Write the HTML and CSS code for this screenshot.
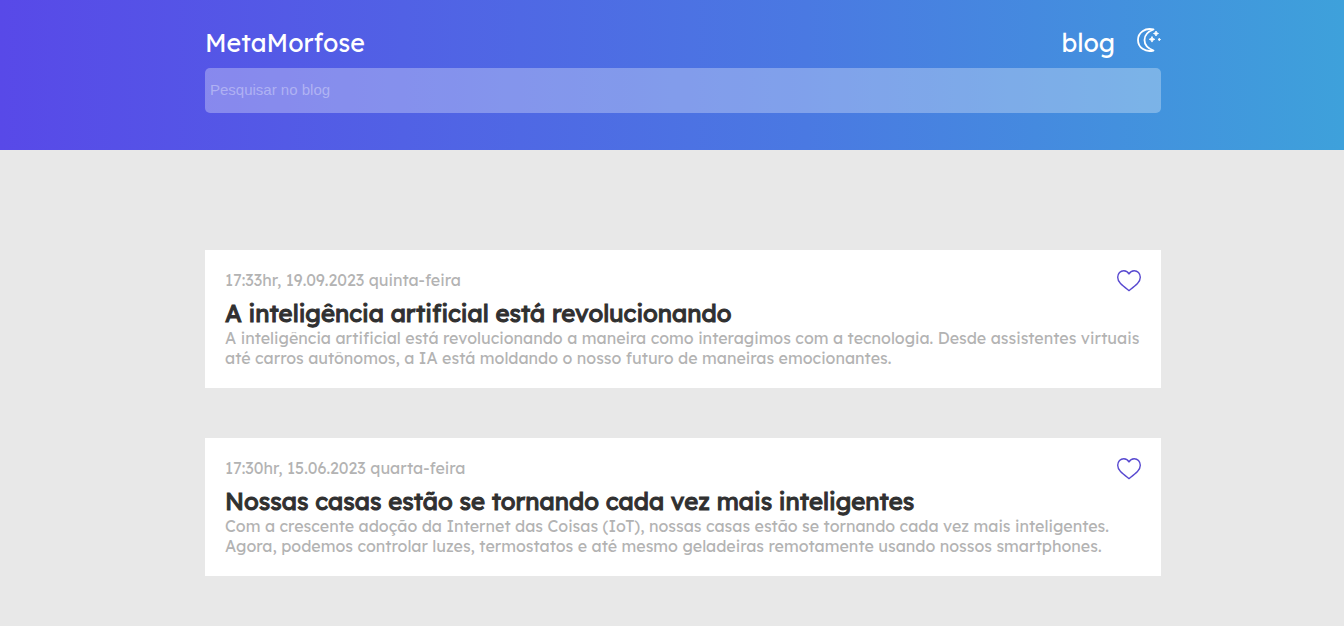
FILE: index.html
```html
<!DOCTYPE html>
<html lang="pt-BR">
<head>
<meta charset="utf-8">
<title>MetaMorfose</title>
<link rel="stylesheet" href="styles.css">
</head>
<body>
<header class="header">
  <div class="header-inner">
    <nav class="nav">
      <a class="brand" href="#">MetaMorfose</a>
      <div class="nav-actions">
        <a class="nav-link" href="#">blog</a>
        <button class="icon-button" type="button" aria-label="Modo escuro">
          <svg class="icon" viewBox="0 0 24 24" aria-hidden="true">
            <path d="M16.500 1.500C8-.5 1 4.500 1 12s7 12.500 15.500 10.500C11 20.500 7.500 17 7.500 12s3.500-8.500 9-10.500Z" fill="none" stroke="currentColor" stroke-width="1.800" stroke-linejoin="round"/>
            <path d="M19 3l.8 1.700 1.700.8-1.700.8-.8 1.700-.8-1.700-1.700-.8 1.700-.8ZM15 8.500l.9 1.900 1.900.9-1.900.9-.9 1.900-.9-1.900-1.900-.9 1.900-.9ZM22.300 10.200l.4.900.9.400-.9.400-.4.900-.4-.9-.9-.4.9-.4Z" fill="currentColor" stroke="currentColor" stroke-width=".8"/>
          </svg>
        </button>
      </div>
    </nav>
    <input class="search" type="search" placeholder="Pesquisar no blog" aria-label="Pesquisar no blog">
  </div>
</header>
<main class="posts">
  <article class="card">
    <div class="card-top">
      <time class="date" datetime="2023-09-19T17:33">17:33hr, 19.09.2023 quinta-feira</time>
      <button class="icon-button like" type="button" aria-label="Curtir">
        <svg class="icon" viewBox="0 0 24 24" aria-hidden="true"><path d="M12 22.600C10 21 6 18 3.500 15.500 1.500 13.500.7 11.400.7 9.300.7 5.500 3.500 2.700 6.800 2.700c2.200 0 4.100 1.200 5.200 3.300 1.100-2.100 3-3.300 5.200-3.300 3.300 0 6.100 2.800 6.100 6.600 0 2.100-.8 4.200-2.800 6.200C18 18 14 21 12 22.600Z" fill="none" stroke="currentColor" stroke-width="1.400" stroke-linejoin="round"/></svg>
      </button>
    </div>
    <h2 class="title">A inteligência artificial está revolucionando</h2>
    <p class="text">A inteligência artificial está revolucionando a maneira como interagimos com a tecnologia. Desde assistentes virtuais até carros autônomos, a IA está moldando o nosso futuro de maneiras emocionantes.</p>
  </article>
  <article class="card">
    <div class="card-top">
      <time class="date" datetime="2023-06-15T17:30">17:30hr, 15.06.2023 quarta-feira</time>
      <button class="icon-button like" type="button" aria-label="Curtir">
        <svg class="icon" viewBox="0 0 24 24" aria-hidden="true"><path d="M12 22.600C10 21 6 18 3.500 15.500 1.500 13.500.7 11.400.7 9.300.7 5.500 3.500 2.700 6.800 2.700c2.200 0 4.100 1.200 5.200 3.300 1.100-2.100 3-3.300 5.200-3.300 3.300 0 6.100 2.800 6.100 6.600 0 2.100-.8 4.200-2.800 6.200C18 18 14 21 12 22.600Z" fill="none" stroke="currentColor" stroke-width="1.400" stroke-linejoin="round"/></svg>
      </button>
    </div>
    <h2 class="title">Nossas casas estão se tornando cada vez mais inteligentes</h2>
    <p class="text">Com a crescente adoção da Internet das Coisas (IoT), nossas casas estão se tornando cada vez mais inteligentes. Agora, podemos controlar luzes, termostatos e até mesmo geladeiras remotamente usando nossos smartphones.</p>
  </article>
</main>
</body>
</html>
```

FILE: styles.css
```css
* { box-sizing: border-box; margin: 0; padding: 0; }

body {
  background: #e8e8e8;
  font-family: Lexend, Inter, "Open Sans", sans-serif;
  font-size: 16px;
  line-height: 20px;
}

.header,
.posts {
  display: grid;
  grid-template-columns: 205fr 956fr 183fr;
}

.header > *,
.posts > * { grid-column: 2; min-width: 0; }

.header {
  padding: 26px 0 37px;
  background: linear-gradient(90deg, #5849e8 0%, #4a79e2 60%, #3ea1db 100%);
}

.nav {
  display: flex;
  justify-content: space-between;
  padding-bottom: 8px;
  color: #fff;
}

.nav-actions { display: flex; gap: 22px; }

.brand,
.nav-link {
  color: #fff;
  font-size: 25px;
  font-weight: 400;
  line-height: 34px;
  text-decoration: none;
}

.icon-button {
  width: 24px;
  height: 28px;
  border: 0;
  background: none;
  color: #fff;
  cursor: pointer;
}

.icon { display: block; width: 24px; height: 24px; margin: auto; }

.search {
  display: block;
  width: 100%;
  height: 45px;
  padding: 0 5px 2px;
  border: 0;
  border-radius: 5px;
  background: rgba(255, 255, 255, 0.3);
  color: #fff;
  font-family: "Liberation Sans", Arial, sans-serif;
  font-size: 15px;
  appearance: none;
}

.search::placeholder { color: rgba(255, 255, 255, 0.35); }

.posts { row-gap: 50px; padding: 100px 0 50px; }

.card { padding: 16px 20px 20px; background: #fff; }

.card-top {
  display: flex;
  align-items: center;
  justify-content: space-between;
  padding-bottom: 4px;
}

.date { color: #b3b3b3; }

.like { color: #5849d0; }

.title {
  color: #303030;
  font-size: 24px;
  font-weight: 400;
  line-height: 30px;
  -webkit-text-stroke: 1px currentColor;
}

.text { color: #b3b3b3; }
```
